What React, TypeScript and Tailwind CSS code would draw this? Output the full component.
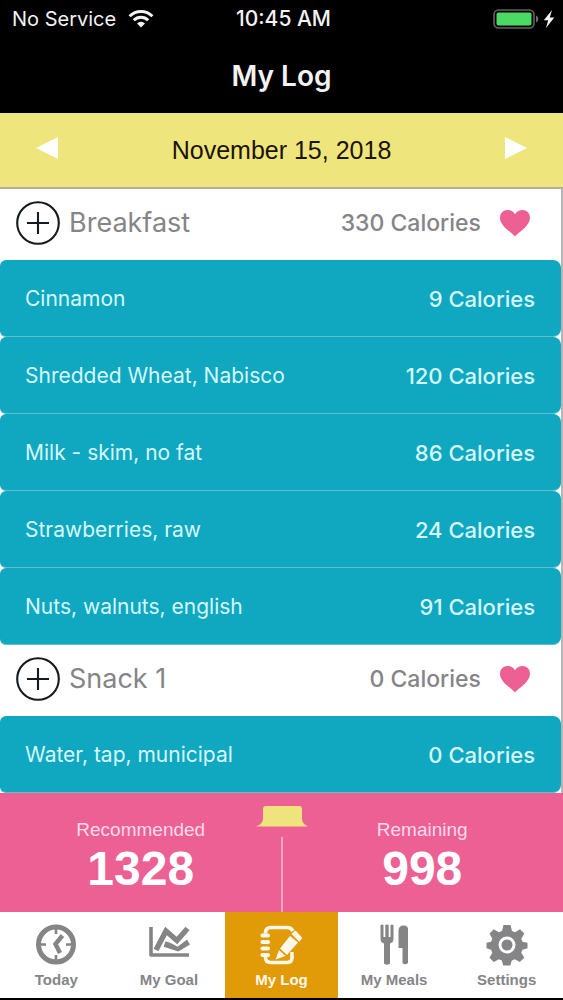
import type { ReactNode } from "react";

type Food = { name: string; calories: number };
type Meal = { name: string; calories: number; foods: Food[] };

const meals: Meal[] = [
  {
    name: "Breakfast",
    calories: 330,
    foods: [
      { name: "Cinnamon", calories: 9 },
      { name: "Shredded Wheat, Nabisco", calories: 120 },
      { name: "Milk - skim, no fat", calories: 86 },
      { name: "Strawberries, raw", calories: 24 },
      { name: "Nuts, walnuts, english", calories: 91 },
    ],
  },
  {
    name: "Snack 1",
    calories: 0,
    foods: [{ name: "Water, tap, municipal", calories: 0 }],
  },
];

function StatusBar() {
  return (
    <div className="flex h-[38px] items-center justify-between pr-2 pl-3 text-[20px] leading-6">
      <div className="flex flex-1 items-center gap-3">
        <span>No Service</span>
        <svg width="26" height="18" viewBox="0 0 26 18" fill="none" stroke="currentColor" aria-hidden="true">
          <path d="M1.6 6.2a16.2 16.2 0 0 1 22.8 0" strokeWidth="3" />
          <path d="M5.8 10.3a10.2 10.2 0 0 1 14.4 0" strokeWidth="3" />
          <path d="M9 13.4a5.7 5.7 0 0 1 8 0L13 17.6z" fill="currentColor" stroke="none" />
        </svg>
      </div>
      <span className="text-[21px] font-medium">10:45 AM</span>
      <div className="flex flex-1 items-center justify-end gap-1">
        <svg width="46" height="20" viewBox="0 0 46 20" aria-hidden="true">
          <rect x="1" y="1" width="40" height="18" rx="4.5" fill="none" stroke="#5b665e" strokeWidth="1.6" />
          <rect x="3.5" y="3.5" width="35" height="13" rx="2" fill="#4cd964" />
          <path d="M43 6.5c3 1 3 6 0 7z" fill="#6b6b6b" />
        </svg>
        <svg width="12" height="20" viewBox="0 0 12 20" fill="currentColor" aria-hidden="true">
          <path d="M9 1 .8 11.2h4.400L3 19l8.300-10.600H6.800z" />
        </svg>
      </div>
    </div>
  );
}

function DateBar() {
  return (
    <div className="flex h-[76px] items-center justify-between border-b-2 border-[#b3aea0] bg-[#eee57d] px-[35px]">
      <button type="button" aria-label="Previous day" className="pb-1 text-white">
        <svg width="24" height="24" viewBox="0 0 24 24" fill="currentColor">
          <path d="M23 1v22L1 12z" />
        </svg>
      </button>
      <time dateTime="2018-11-15" className="font-['Liberation_Sans',sans-serif] text-[25px] leading-7 text-[#1c1404]">
        November 15, 2018
      </time>
      <button type="button" aria-label="Next day" className="pb-1 text-white">
        <svg width="24" height="24" viewBox="0 0 24 24" fill="currentColor">
          <path d="M1 1v22l22-11z" />
        </svg>
      </button>
    </div>
  );
}

function MealSection({ meal }: { meal: Meal }) {
  return (
    <section>
      <div className="flex h-[71px] items-center pr-[30px] pb-[3px] pl-4 text-[#858487]">
        <button type="button" aria-label={`Add to ${meal.name}`} className="text-[#16191d]">
          <svg width="44" height="44" viewBox="0 0 44 44" fill="none" stroke="currentColor" strokeWidth="2.1">
            <circle cx="22" cy="22" r="20.8" />
            <path d="M22 11v22M11 22h22" />
          </svg>
        </button>
        <h2 className="ml-[9px] flex-1 text-[27px] leading-8 font-normal">{meal.name}</h2>
        <span className="text-[23px] leading-7 font-medium">{meal.calories} Calories</span>
        <button type="button" aria-label={`Mark ${meal.name} as favorite`} className="ml-[18px] text-[#ec6094]">
          <svg width="32" height="28" viewBox="0 0 32 28" fill="currentColor">
            <path d="M16 27.5C13.5 24 1 17.5 1 8.8 1 4 4.400 1 8.500 1c3.400 0 6 1.600 7.500 4.300C17.500 2.600 20.100 1 23.500 1 27.600 1 31 4 31 8.800c0 8.700-12.500 15.200-15 18.700z" />
          </svg>
        </button>
      </div>
      <ul>
        {meal.foods.map((food) => (
          <li
            key={food.name}
            className="flex h-[77px] items-center justify-between rounded-l-md rounded-r-lg border-b border-[#63bfca] bg-[#10a7c0] pt-px pr-[26px] pl-[25px] text-[21px] leading-6 text-[#d5f8fc]"
          >
            <span>{food.name}</span>
            <span className="text-[22px] font-medium">{food.calories} Calories</span>
          </li>
        ))}
      </ul>
    </section>
  );
}

function Total({ label, value }: { label: string; value: number }) {
  return (
    <div className="flex flex-1 flex-col items-center pt-[25px]">
      <span className="text-[19px] leading-6 text-[#ffdbea]">{label}</span>
      <strong className="text-[48px] leading-[54px] font-bold">{value}</strong>
    </div>
  );
}

function Totals() {
  return (
    <div className="flex h-[119px] bg-[#ed6094] font-['Liberation_Sans',sans-serif] text-white">
      <Total label="Recommended" value={1328} />
      <div className="flex w-0 flex-col items-center pt-3">
        <button type="button" aria-label="Show details">
          <svg width="52" height="22" viewBox="0 0 52 22" fill="#efe37d">
            <path d="M10 1h33q3 0 3 3v10q0 5 6 7.500H0Q7 19 7 14V4q0-3 3-3z" />
          </svg>
        </button>
        <div className="mt-[10px] w-[2px] flex-1 bg-[#f8a4c3]" />
      </div>
      <Total label="Remaining" value={998} />
    </div>
  );
}

function Icon({ children }: { children: ReactNode }) {
  return (
    <svg width="42" height="42" viewBox="0 0 42 42" fill="none" stroke="currentColor" aria-hidden="true">
      {children}
    </svg>
  );
}

const tabs = [
  {
    label: "Today",
    icon: (
      <Icon>
        <circle cx="21" cy="20.500" r="17.500" strokeWidth="5" />
        <path d="M21 5v5M21 31v5M6 20.500h5M31 20.500h5" strokeWidth="2.600" />
        <path d="m27.500 11.500-7 8.500 4.500 9" strokeWidth="4.400" />
      </Icon>
    ),
  },
  {
    label: "My Goal",
    icon: (
      <Icon>
        <path d="M3 3v28h38" strokeWidth="3.600" strokeLinejoin="round" />
        <path d="m8 26 10-19 11 9.500L39.500 4.500" strokeWidth="5.400" />
        <path d="m16.500 20 13.500 4.500L40.500 18" strokeWidth="5.600" />
        <path d="m11.500 27 6.500-11.500 11.500 6.500 10.500-8" stroke="#fff" strokeWidth="1.100" />
      </Icon>
    ),
  },
  {
    label: "My Log",
    active: true,
    icon: (
      <Icon>
        <path
          d="M5.500 9.500V9q0-5.500 5.500-5.500h16.500q3.500 0 5.500 3.500M5.500 33v.5q0 5 5.500 5h16q5 0 5-5V28"
          strokeWidth="3.600"
        />
        <path d="M2.500 11.500H8M2.500 18H8M2.500 24.500H8M2.500 31H8" strokeWidth="4.200" strokeLinecap="round" />
        <path d="m30 12 8 6.500L27 31l-7-6.500z" fill="currentColor" stroke="none" />
        <path d="m31.500 10 3-3q1-.5 2 .5l5 5.500q.8 1 0 2l-2.200 2.700z" fill="currentColor" stroke="none" />
        <path d="m19 26 6.500 6-10 3.500z" fill="currentColor" stroke="none" />
      </Icon>
    ),
  },
  {
    label: "My Meals",
    icon: (
      <Icon>
        <path
          d="M7.500 1q1.500-1 3 0v12h1.800V1q1.700-1 3.400 0v12h1.800V1q1.500-1 3 0v14q0 3.500-3.500 4.500v20q-3 2.500-6 0v-20Q7.500 18.500 7.500 15zM25.500 7q0-5.500 5-5.500T35 6v33q-3 2.500-5.500 0V24h-4z"
          fill="currentColor"
          stroke="none"
        />
      </Icon>
    ),
  },
  {
    label: "Settings",
    icon: (
      <Icon>
        <path
          d="M17.500 1h7l1.500 6 3 1.200 5-3 4.300 4.300-3 5.300 1.200 3 5 1v5.500l-5 1.500-1.200 3 3 5-4.500 4.300-5-2.800-3 1.200-1.500 5h-7l-1.500-5-3-1.200-5 2.800-4.300-4.300 2.800-5-1.200-3-4.600-1.500v-5.500l4.600-1 1.200-3-2.800-5.300 4.300-4.300 5 3L16 7z"
          fill="currentColor"
          stroke="none"
          strokeLinejoin="round"
        />
        <circle cx="21" cy="21" r="7" stroke="#fff" strokeWidth="3" />
      </Icon>
    ),
  },
];

function TabBar() {
  return (
    <nav className="grid h-[88px] grid-cols-5 border-b-2 border-black bg-white font-['Liberation_Sans',sans-serif]">
      {tabs.map((tab) => (
        <a
          key={tab.label}
          href="#"
          aria-current={tab.active ? "page" : undefined}
          className={`flex flex-col items-center gap-1 pt-3 text-[15px] leading-5 font-bold ${
            tab.active ? "bg-[#e19a08] text-[#fff8e8]" : "text-[#858587]"
          }`}
        >
          {tab.icon}
          <span>{tab.label}</span>
        </a>
      ))}
    </nav>
  );
}

export default function App() {
  return (
    <div className="flex min-h-screen flex-col bg-white font-['Inter',sans-serif]">
      <header className="bg-black text-[#f3f3f3]">
        <StatusBar />
        <h1 className="flex h-[75px] items-center justify-center text-[28px] leading-8 font-semibold">My Log</h1>
      </header>
      <DateBar />
      <main className="flex-1 border-r-2 border-[#b5b5b8]">
        {meals.map((meal) => (
          <MealSection key={meal.name} meal={meal} />
        ))}
      </main>
      <Totals />
      <TabBar />
    </div>
  );
}
